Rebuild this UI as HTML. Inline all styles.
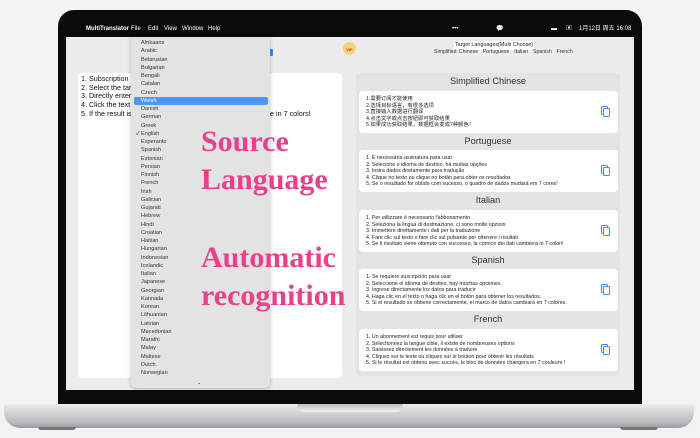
<!DOCTYPE html>
<html><head><meta charset="utf-8"><style>
*{margin:0;padding:0;box-sizing:border-box}
body{width:700px;height:438px;background:#f3f3f3;position:relative;overflow:hidden;font-family:"Liberation Sans","Noto Sans CJK SC",sans-serif}
.a{position:absolute}
.bezel{left:58px;top:10px;width:584px;height:396px;background:#0b0b0b;border-radius:16px 16px 0 0}
.screen{left:66px;top:37px;width:568px;height:353px;background:#ececec}
.menu{left:66px;top:22px;width:568px;height:15px;color:#fff;font-size:6px;line-height:15px}
.menu span{position:absolute}
.base{left:4px;top:404px;width:690px;height:24px;background:linear-gradient(#ececee,#d0d1d3 40%,#b5b6b9 80%,#9a9b9e);border-radius:2px 2px 16px 16px}
.notch{left:297px;top:404px;width:106px;height:8px;background:linear-gradient(#bdbec0,#f2f2f2);border-radius:0 0 7px 7px}
.foot{top:427px;width:38px;height:3px;background:#777;border-radius:0 0 3px 3px}
.left{left:78px;top:73px;width:264px;height:305px;background:#fff;border-radius:4px}
.ltxt{left:81px;top:75px;font-size:7.2px;line-height:8.7px;color:#111}
.right{left:356px;top:73px;width:264px;height:303px;background:#e4e4e4;border-radius:3px}
.h{width:264px;text-align:center;font-size:9.2px;color:#333;left:356px}
.card{left:359px;width:259px;height:42px;background:#fff;border-radius:4px;font-size:5.3px;line-height:6.6px;color:#222;padding:5px 0 0 7px}
.copy{position:absolute;right:8px;top:15px;width:9px;height:11px}
.dd{left:131px;top:37px;width:139px;height:351px;background:#e3e3e3;border-radius:0 0 5px 5px;box-shadow:0 1px 4px rgba(0,0,0,.25);font-size:5.6px;color:#333}
.dd div{position:absolute;left:10px;height:8px;line-height:8px}
.sel{left:3px!important;width:134px;background:#4e95f5;color:#fff;padding-left:7px;border-radius:2px}
.pink{left:201px;font-family:"Liberation Serif",serif;font-weight:bold;font-size:30px;color:#e8408a;line-height:30px}
</style></head><body>
<div class="a bezel"></div>
<div class="a screen"></div>
<div class="a menu">
<span style="left:8px;font-size:7px"></span>
<span style="left:20px;font-weight:bold">MultiTranslator</span>
<span style="left:65px">File</span><span style="left:82px">Edit</span><span style="left:98px">View</span><span style="left:116px">Window</span><span style="left:142px">Help</span>
<span style="left:386px">•••</span><span style="left:430px">💬</span><span style="left:485px">▬</span><span style="left:500px">▣</span>
<span style="left:513px">1月12日 周五 16:08</span>
</div>
<div class="a left"></div>
<div class="a ltxt">1. Subscription is<br>2. Select the targ<br>3. Directly enter d<br>4. Click the text o<br>5. If the result is c<span style="position:absolute;left:185px;white-space:nowrap">ge in 7 colors!</span></div>
<div class="a" style="left:343px;top:42px;width:13px;height:13px;border-radius:50%;background:#f6d27a;font-size:4px;color:#b33;text-align:center;line-height:15px;font-weight:bold">VIP</div>
<div class="a" style="left:454px;top:41px;width:80px;height:9px;background:#fff;border-radius:2px;font-size:5.4px;text-align:center;line-height:9px;color:#222">Target Languages(Multi Choose)</div>
<div class="a" style="left:434px;top:49px;font-size:5.2px;color:#333;word-spacing:1px">Simplified Chinese&nbsp; Portuguese&nbsp; Italian&nbsp; Spanish&nbsp; French</div>
<div class="a right"></div>
<div class="a h" style="top:76px">Simplified Chinese</div>
<div class="a card" style="top:91px">1.需要订阅才能使用<br>2.选择目标语言，有很多选项<br>3.直接输入数据进行翻译<br>4.点击文字或点击按钮即可获取结果<br>5.如果成功获取结果，数据框会变成7种颜色！<svg class="copy" viewBox="0 0 9 11"><rect x="0.5" y="0.5" width="6" height="8" rx="1" fill="none" stroke="#3a8ef6"/><rect x="2.5" y="2.5" width="6" height="8" rx="1" fill="#fff" stroke="#3a8ef6"/></svg></div>
<div class="a h" style="top:136px">Portuguese</div>
<div class="a card" style="top:150px">1. É necessária assinatura para usar<br>2. Selecione o idioma de destino, há muitas opções<br>3. Insira dados diretamente para tradução<br>4. Clique no texto ou clique no botão para obter os resultados<br>5. Se o resultado for obtido com sucesso, o quadro de dados mudará em 7 cores!<svg class="copy" viewBox="0 0 9 11"><rect x="0.5" y="0.5" width="6" height="8" rx="1" fill="none" stroke="#3a8ef6"/><rect x="2.5" y="2.5" width="6" height="8" rx="1" fill="#fff" stroke="#3a8ef6"/></svg></div>
<div class="a h" style="top:195px">Italian</div>
<div class="a card" style="top:210px">1. Per utilizzare è necessario l'abbonamento<br>2. Seleziona la lingua di destinazione, ci sono molte opzioni<br>3. Immettere direttamente i dati per la traduzione<br>4. Fare clic sul testo o fare clic sul pulsante per ottenere i risultati<br>5. Se il risultato viene ottenuto con successo, la cornice dei dati cambierà in 7 colori!<svg class="copy" viewBox="0 0 9 11"><rect x="0.5" y="0.5" width="6" height="8" rx="1" fill="none" stroke="#3a8ef6"/><rect x="2.5" y="2.5" width="6" height="8" rx="1" fill="#fff" stroke="#3a8ef6"/></svg></div>
<div class="a h" style="top:255px">Spanish</div>
<div class="a card" style="top:269px">1. Se requiere suscripción para usar<br>2. Seleccione el idioma de destino, hay muchas opciones.<br>3. Ingrese directamente los datos para traducir<br>4. Haga clic en el texto o haga clic en el botón para obtener los resultados.<br>5. Si el resultado se obtiene correctamente, el marco de datos cambiará en 7 colores.<svg class="copy" viewBox="0 0 9 11"><rect x="0.5" y="0.5" width="6" height="8" rx="1" fill="none" stroke="#3a8ef6"/><rect x="2.5" y="2.5" width="6" height="8" rx="1" fill="#fff" stroke="#3a8ef6"/></svg></div>
<div class="a h" style="top:314px">French</div>
<div class="a card" style="top:329px">1. Un abonnement est requis pour utiliser<br>2. Sélectionnez la langue cible, il existe de nombreuses options<br>3. Saisissez directement les données à traduire<br>4. Cliquez sur le texte ou cliquez sur le bouton pour obtenir les résultats<br>5. Si le résultat est obtenu avec succès, le bloc de données changera en 7 couleurs !<svg class="copy" viewBox="0 0 9 11"><rect x="0.5" y="0.5" width="6" height="8" rx="1" fill="none" stroke="#3a8ef6"/><rect x="2.5" y="2.5" width="6" height="8" rx="1" fill="#fff" stroke="#3a8ef6"/></svg></div>
<div class="a" style="left:268px;top:49px;width:5px;height:7px;background:#3a8ef6;border-radius:1px"></div>
<div class="a dd">
<div style="top:2px">Afrikaans</div><div style="top:10.25px">Arabic</div><div style="top:18.5px">Belarusian</div><div style="top:26.75px">Bulgarian</div><div style="top:35px">Bengali</div><div style="top:43.25px">Catalan</div><div style="top:51.5px">Czech</div><div class="sel" style="top:59.75px">Welsh</div><div style="top:68px">Danish</div><div style="top:76.25px">German</div><div style="top:84.5px">Greek</div><div style="top:92.75px"><span style="position:absolute;left:-5px">✓</span>English</div><div style="top:101px">Esperanto</div><div style="top:109.25px">Spanish</div><div style="top:117.5px">Estonian</div><div style="top:125.75px">Persian</div><div style="top:134px">Finnish</div><div style="top:142.25px">French</div><div style="top:150.5px">Irish</div><div style="top:158.75px">Galician</div><div style="top:167px">Gujarati</div><div style="top:175.25px">Hebrew</div><div style="top:183.5px">Hindi</div><div style="top:191.75px">Croatian</div><div style="top:200px">Haitian</div><div style="top:208.25px">Hungarian</div><div style="top:216.5px">Indonesian</div><div style="top:224.75px">Icelandic</div><div style="top:233px">Italian</div><div style="top:241.25px">Japanese</div><div style="top:249.5px">Georgian</div><div style="top:257.75px">Kannada</div><div style="top:266px">Korean</div><div style="top:274.25px">Lithuanian</div><div style="top:282.5px">Latvian</div><div style="top:290.75px">Macedonian</div><div style="top:299px">Marathi</div><div style="top:307.25px">Malay</div><div style="top:315.5px">Maltese</div><div style="top:323.75px">Dutch</div><div style="top:332px">Norwegian</div><div style="top:342px;left:66px;font-size:5px">⌄</div>
</div>
<div class="a pink" style="top:127px">Source</div>
<div class="a pink" style="top:165px">Language</div>
<div class="a pink" style="top:243px">Automatic</div>
<div class="a pink" style="top:281px">recognition</div>
<div class="a base"></div>
<div class="a notch"></div>
<div class="a foot" style="left:38px"></div>
<div class="a foot" style="left:620px"></div>
</body></html>
